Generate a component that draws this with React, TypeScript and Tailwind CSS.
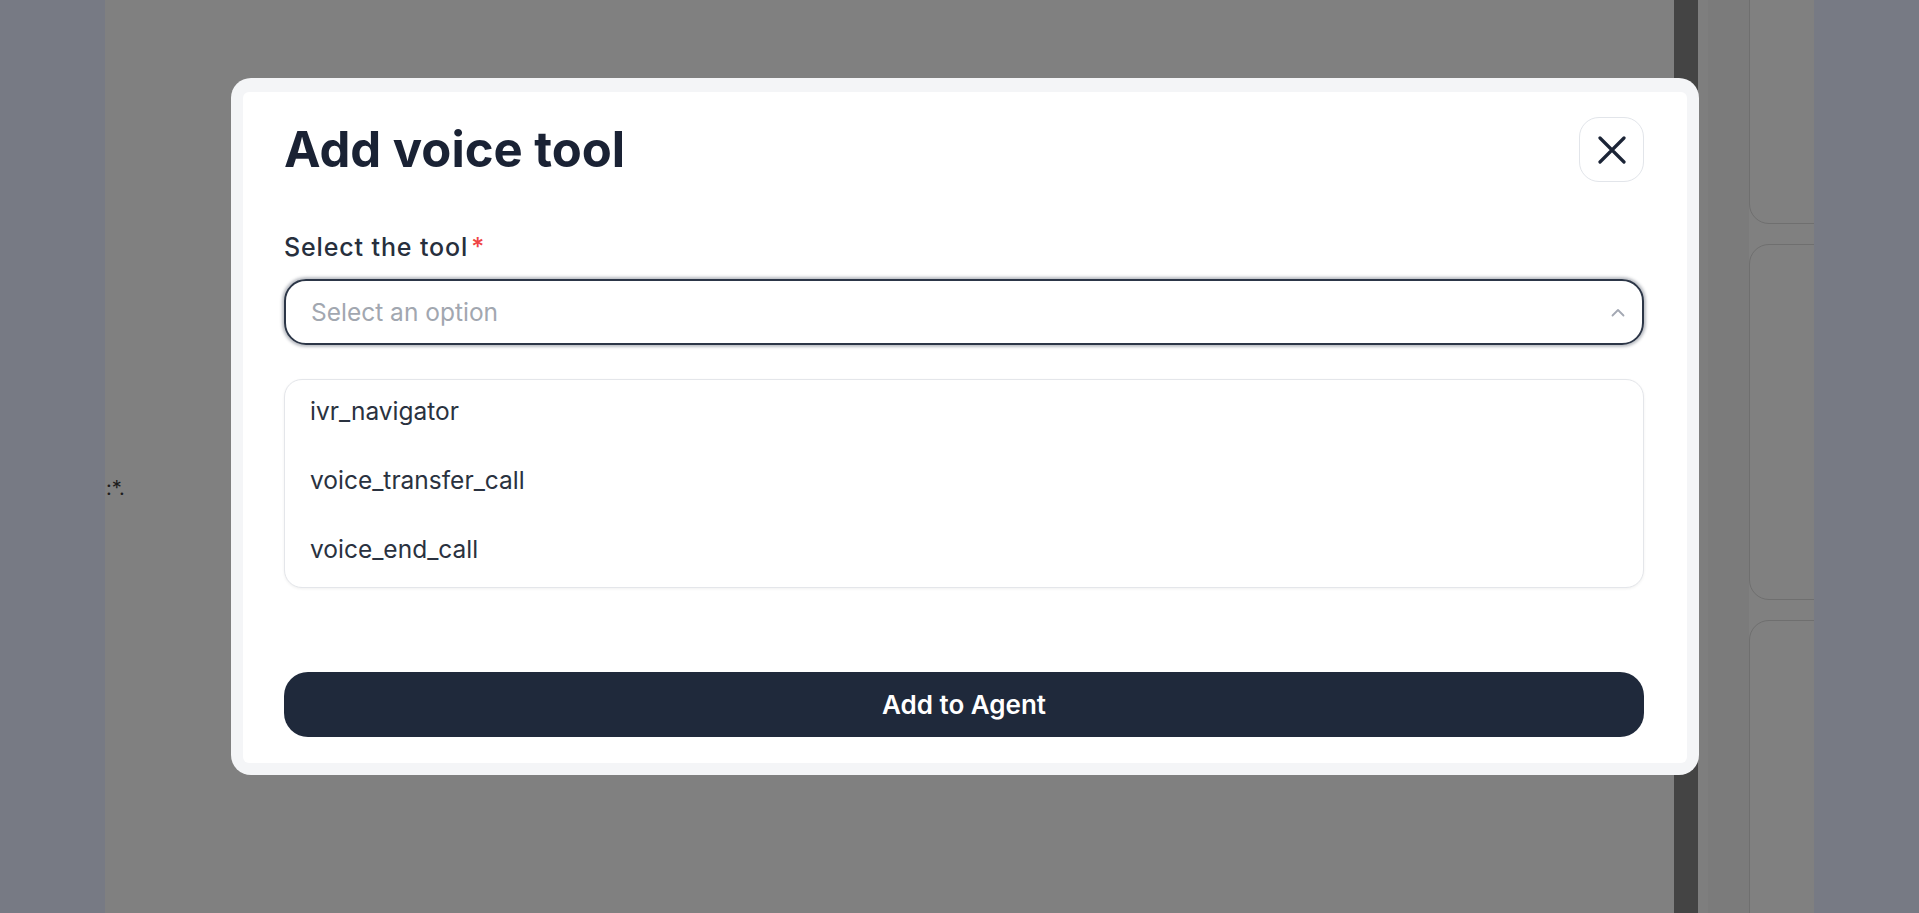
import React from "react";

const tools = ["ivr_navigator", "voice_transfer_call", "voice_end_call"];

const CloseIcon: React.FC = () => (
	<svg width="28" height="28" viewBox="0 0 28 28" fill="none">
		<path
			d="M2 2L26 26M26 2L2 26"
			stroke="#1b2436"
			strokeWidth="3.2"
			strokeLinecap="round"
		/>
	</svg>
);

const ChevronUp: React.FC = () => (
	<svg width="14" height="9" viewBox="0 0 14 9" fill="none">
		<path
			d="M1.5 7.5L7 2L12.5 7.5"
			stroke="#a3a8b3"
			strokeWidth="1.8"
			strokeLinecap="round"
			strokeLinejoin="round"
		/>
	</svg>
);

const ToolModal: React.FC = () => {
	return (
		<div className="absolute left-[231px] top-[78px] w-[1468px] rounded-[20px] bg-[#f4f5f7] px-[12px] pt-[14px] pb-[12px]">
			<div className="rounded-[6px] bg-white pl-[41px] pr-[43px] pt-[25px] pb-[26px]">
				<div className="flex items-center justify-between">
					<h2 className="text-[49px] font-bold leading-none text-[#1a2234]">
						Add voice tool
					</h2>
					<button className="flex h-[65px] w-[65px] items-center justify-center rounded-[20px] border border-[#e2e5ea] bg-white">
						<CloseIcon />
					</button>
				</div>

				<label className="mt-[49px] block text-[25px] font-medium leading-[32px] tracking-[0.035em] text-[#272f3d]">
					Select the tool
					<span className="ml-[3px] text-[#ef4444]">*</span>
				</label>

				<div className="mt-[16px] flex h-[66px] items-center justify-between rounded-[22px] border-2 border-[#2c3647] pl-[25px] pr-[17px] shadow-[0_0_3px_2px_rgba(30,41,59,0.3)]">
					<span className="text-[24.5px] text-[#a2a7b0]">Select an option</span>
					<ChevronUp />
				</div>

				<ul className="mt-[34px] rounded-[18px] border border-[#e4e6ea] bg-white shadow-[0_1px_3px_rgba(0,0,0,0.06)]">
					{tools.map((tool) => (
						<li
							key={tool}
							className="flex h-[69px] items-center pb-[6px] pl-[25px] text-[24.5px] text-[#2a3240]"
						>
							{tool}
						</li>
					))}
				</ul>

				<button className="mt-[84px] flex h-[65px] w-full items-center justify-center rounded-[24px] bg-[#1f293b] text-[26px] font-semibold text-white">
					Add to Agent
				</button>
			</div>
		</div>
	);
};

const App: React.FC = () => {
	return (
		<div className="relative flex h-[913px] w-full flex-col overflow-hidden bg-[#777a84] font-['Inter',sans-serif]">
			<div className="flex flex-1">
				<aside className="w-[105px] shrink-0 bg-[#777a84]" />
				<main className="flex-1 bg-[#808080] pl-[1px] pt-[473px] text-[20px] text-[#1c1c1c]">
					<span>:*.</span>
				</main>
				<div className="w-[24px] shrink-0 bg-[#444444]" />
				<div className="flex w-[116px] shrink-0 overflow-hidden bg-[#7b7b7b]">
					<div className="w-[10px] shrink-0 bg-[#7e7e7e]" />
					<div className="w-[41px] shrink-0" />
					<div className="flex flex-col gap-[20px] bg-[#808080] pt-0">
						<div className="-mt-[60px] h-[284px] w-[200px] shrink-0 rounded-[20px] border border-[#6f6f6f]" />
						<div className="h-[356px] w-[200px] shrink-0 rounded-[20px] border border-[#6f6f6f]" />
						<div className="h-[400px] w-[200px] shrink-0 rounded-[20px] border border-[#6f6f6f]" />
					</div>
				</div>
				<aside className="w-[105px] shrink-0 bg-[#777a84]" />
			</div>
			<div className="h-[6px] bg-[#777a84]" />

			<ToolModal />
		</div>
	);
};

export default App;
